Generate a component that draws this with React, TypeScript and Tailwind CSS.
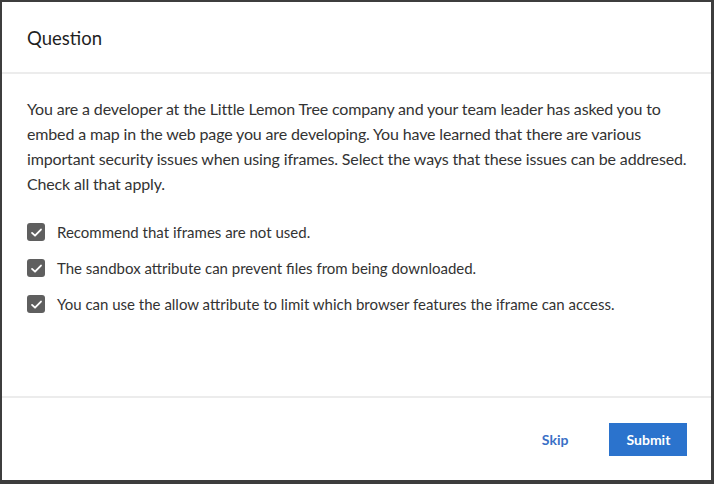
import React from "react";

const options = [
  "Recommend that iframes are not used.",
  "The sandbox attribute can prevent files from being downloaded.",
  "You can use the allow attribute to limit which browser features the iframe can access.",
];

const CheckedBox: React.FC = () => (
  <span className="flex h-[18px] w-[18px] shrink-0 items-center justify-center rounded-[3px] bg-[#5f5f5f]">
    <svg width="13" height="13" viewBox="0 0 14 14" fill="none">
      <path
        d="M2.2 7.4 L5.4 10.4 L11.8 3.8"
        stroke="white"
        strokeWidth="2"
        strokeLinecap="round"
        strokeLinejoin="round"
      />
    </svg>
  </span>
);

const App: React.FC = () => {
  return (
    <div
      className="flex h-[484px] w-[714px] bg-[#3d3d3d] pt-[2px] pl-[2px] pr-[3px] pb-[4px]"
      style={{ fontFamily: "Lato, 'Open Sans', sans-serif" }}
    >
      <div className="flex flex-1 flex-col bg-white">
        <div className="flex h-[72px] shrink-0 items-center border-b-2 border-[#ececec] px-[25px] pt-[3px]">
          <h2 className="text-[18.5px] text-[#1f1f1f]">Question</h2>
        </div>
        <div className="flex-1 px-[25px] pt-[22px]">
          <p className="whitespace-nowrap text-[16px] leading-[25px] tracking-[-0.15px] text-[#333333]">
            You are a developer at the Little Lemon Tree company and your team leader has asked you to
            <br />
            embed a map in the web page you are developing. You have learned that there are various
            <br />
            important security issues when using iframes. Select the ways that these issues can be addresed.
            <br />
            Check all that apply.
          </p>
          <div className="mt-[18px] flex flex-col">
            {options.map((o) => (
              <label key={o} className="flex h-[36px] items-center gap-[12px]">
                <CheckedBox />
                <span className="text-[15px] text-[#333333]">{o}</span>
              </label>
            ))}
          </div>
        </div>
        <div className="flex h-[84px] shrink-0 items-center justify-end gap-[41px] border-t-2 border-[#ececec] pr-[24px]">
          <button className="text-[14px] font-bold text-[#3a6fc6]">Skip</button>
          <button className="h-[33px] w-[78px] bg-[#2b73cd] text-[14px] font-bold text-white">
            Submit
          </button>
        </div>
      </div>
    </div>
  );
};

export default App;
